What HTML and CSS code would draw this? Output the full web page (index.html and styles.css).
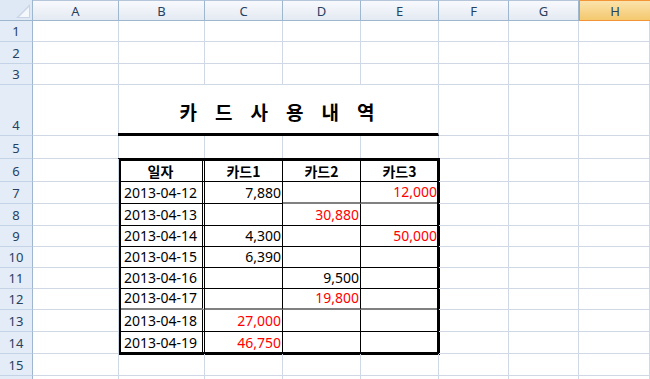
FILE: index.html
```html
<!DOCTYPE html>
<html lang="ko">
<head>
  <meta charset="UTF-8">
  <title>카드 사용 내역</title>
  <link rel="stylesheet" href="styles.css">
</head>
<body>

  <div class="hoja">
    <!-- encabezado de columnas -->
    <div class="esquina"><svg width="14" height="14" viewBox="0 0 14 14"><polygon points="14,0 14,14 0,14" fill="#c9d5e6"/><polygon points="13,3 13,13 3,13" fill="#f4f7fb"/></svg></div>
    <div class="col-head">A</div>
    <div class="col-head">B</div>
    <div class="col-head">C</div>
    <div class="col-head">D</div>
    <div class="col-head">E</div>
    <div class="col-head">F</div>
    <div class="col-head">G</div>
    <div class="col-head sel">H</div>

    <div class="row-head">1</div><div class="cell"></div><div class="cell"></div><div class="cell"></div><div class="cell"></div><div class="cell"></div><div class="cell"></div><div class="cell"></div><div class="cell"></div>
    <div class="row-head">2</div><div class="cell"></div><div class="cell"></div><div class="cell"></div><div class="cell"></div><div class="cell"></div><div class="cell"></div><div class="cell"></div><div class="cell"></div>
    <div class="row-head">3</div><div class="cell"></div><div class="cell"></div><div class="cell"></div><div class="cell"></div><div class="cell"></div><div class="cell"></div><div class="cell"></div><div class="cell"></div>

    <div class="row-head">4</div><div class="cell"></div>
    <div class="cell titulo">카드사용내역</div>
    <div class="cell"></div><div class="cell"></div><div class="cell"></div>

    <div class="row-head">5</div><div class="cell"></div><div class="cell"></div><div class="cell"></div><div class="cell"></div><div class="cell"></div><div class="cell"></div><div class="cell"></div><div class="cell"></div>

    <!-- tabla B6:E14 -->
    <div class="tabla">
      <div class="cell t th fecha">일자</div><div class="cell t th">카드1</div><div class="cell t th">카드2</div><div class="cell t th">카드3</div>
      <div class="cell t fecha">2013-04-12</div><div class="cell t num">7,880</div><div class="cell t num gris"></div><div class="cell t num rojo gris">12,000</div>
      <div class="cell t fecha">2013-04-13</div><div class="cell t num"></div><div class="cell t num rojo">30,880</div><div class="cell t num"></div>
      <div class="cell t fecha">2013-04-14</div><div class="cell t num">4,300</div><div class="cell t num"></div><div class="cell t num rojo">50,000</div>
      <div class="cell t fecha">2013-04-15</div><div class="cell t num">6,390</div><div class="cell t num"></div><div class="cell t num"></div>
      <div class="cell t fecha">2013-04-16</div><div class="cell t num"></div><div class="cell t num">9,500</div><div class="cell t num"></div>
      <div class="cell t fecha gris">2013-04-17</div><div class="cell t num gris"></div><div class="cell t num rojo gris">19,800</div><div class="cell t num gris"></div>
      <div class="cell t fecha">2013-04-18</div><div class="cell t num rojo">27,000</div><div class="cell t num"></div><div class="cell t num"></div>
      <div class="cell t fecha">2013-04-19</div><div class="cell t num rojo">46,750</div><div class="cell t num"></div><div class="cell t num"></div>
    </div>

    <div class="row-head">6</div><div class="cell"></div><div class="cell"></div><div class="cell"></div><div class="cell"></div>
    <div class="row-head">7</div><div class="cell"></div><div class="cell"></div><div class="cell"></div><div class="cell"></div>
    <div class="row-head">8</div><div class="cell"></div><div class="cell"></div><div class="cell"></div><div class="cell"></div>
    <div class="row-head">9</div><div class="cell"></div><div class="cell"></div><div class="cell"></div><div class="cell"></div>
    <div class="row-head">10</div><div class="cell"></div><div class="cell"></div><div class="cell"></div><div class="cell"></div>
    <div class="row-head">11</div><div class="cell"></div><div class="cell"></div><div class="cell"></div><div class="cell"></div>
    <div class="row-head">12</div><div class="cell"></div><div class="cell"></div><div class="cell"></div><div class="cell"></div>
    <div class="row-head">13</div><div class="cell"></div><div class="cell"></div><div class="cell"></div><div class="cell"></div>
    <div class="row-head">14</div><div class="cell"></div><div class="cell"></div><div class="cell"></div><div class="cell"></div>

    <div class="row-head">15</div><div class="cell"></div><div class="cell"></div><div class="cell"></div><div class="cell"></div><div class="cell"></div><div class="cell"></div><div class="cell"></div><div class="cell"></div>
    <div class="row-head"></div><div class="cell"></div><div class="cell"></div><div class="cell"></div><div class="cell"></div><div class="cell"></div><div class="cell"></div><div class="cell"></div><div class="cell"></div>
  </div>

</body>
</html>
```

FILE: styles.css
```css
/* --- Estilos Generales --- */
body {
  margin: 0;
  background: #ffffff;
  overflow: hidden;
  font-family: 'Noto Sans', 'Noto Sans CJK KR', sans-serif;
  color: #000;
}

/* --- Hoja (grid) --- */
.hoja {
  display: grid;
  grid-template-columns: 33px 86px 86px 78px 78px 78px 70px 70px 1fr;
  grid-template-rows: 21px 21px 22px 21px 51px 23px 23px 22px 22px 21px 21px 21px 21px 22px 22px 22px 22px;
  width: 650px;
  height: 379px;
  overflow: hidden;
}

.hoja div {
  box-sizing: border-box;
  min-width: 0;
}

/* --- Encabezados --- */
.esquina {
  background: #dfe8f5;
  border-right: 1px solid #9eb6ce;
  border-bottom: 1px solid #9eb6ce;
  display: flex;
  align-items: flex-end;
  justify-content: flex-end;
  padding: 0 2px 2px 0;
}
.esquina svg { display: block; }

.col-head {
  background: linear-gradient(#f7f9fc, #e4eaf3);
  border-top: 1px solid #b5c6da;
  border-right: 1px solid #9eb6ce;
  border-bottom: 1px solid #9eb6ce;
  color: #27415f;
  font-size: 13px;
  display: flex;
  align-items: center;
  justify-content: center;
}
.col-head.sel {
  background: linear-gradient(#fbe3ac, #f4c86e);
  border: 1px solid #f29536;
  border-right: none;
}

.row-head {
  background: #e4ecf7;
  border-right: 1px solid #9eb6ce;
  border-bottom: 1px solid #c5d3e6;
  color: #27415f;
  font-size: 13px;
  line-height: 16px;
  display: flex;
  align-items: flex-end;
  justify-content: center;
  padding-bottom: 2px;
}

/* --- Celdas --- */
.cell {
  border-right: 1px solid #d0d7e5;
  border-bottom: 1px solid #d0d7e5;
  font-size: 14px;
  line-height: 16px;
  display: flex;
  align-items: flex-end;
  padding: 0 2px 2px;
  white-space: nowrap;
}

.titulo {
  grid-column: span 4;
  margin-left: -1px;
  border-bottom: 3px solid #000;
  justify-content: center;
  font-family: 'Noto Sans CJK KR', sans-serif;
  font-weight: bold;
  font-size: 19px;
  line-height: 22px;
  letter-spacing: 18px;
  padding-left: 18px;
  padding-bottom: 10px;
}

/* --- Tabla --- */
.tabla {
  grid-column: 3 / 7;
  grid-row: 7 / 16;
  display: grid;
  grid-template-columns: 86px 78px 78px 78px;
  grid-template-rows: 23px 22px 22px 21px 21px 21px 21px 22px 22px;
  outline: 3px solid #000;
  outline-offset: -2px;
}
.t {
  border-right-color: #000;
  border-bottom-color: #000;
}
.th {
  justify-content: center;
  font-family: 'Noto Sans CJK KR', 'Noto Sans', sans-serif;
  font-weight: bold;
  font-size: 14px;
  padding-bottom: 2px;
}
.fecha {
  justify-content: center;
  border-right: 3px double #000;
}
.num {
  justify-content: flex-end;
  padding-right: 1px;
}
.rojo {
  color: #ff0000;
}
.gris {
  border-bottom: 2px solid #808080;
}
```
